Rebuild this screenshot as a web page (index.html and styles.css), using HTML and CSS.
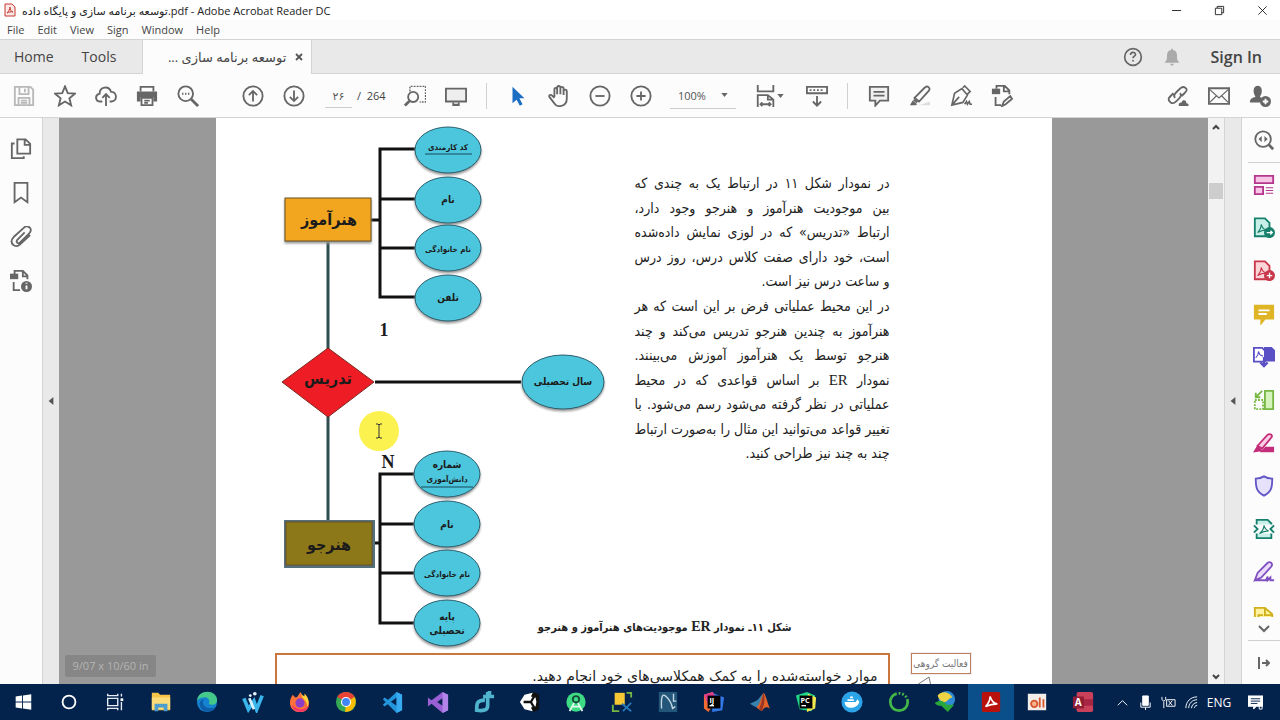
FILE: index.html
```html
<!DOCTYPE html>
<html lang="en">
  <head>
    <meta charset="UTF-8" />
    <meta name="viewport" content="width=device-width, initial-scale=1.0" />
    <title>Adobe Acrobat Reader DC</title>
    <link rel="stylesheet" href="styles.css">
  </head>
  <body>
    <header class="titlebar">
      <svg class="app-icon" viewBox="0 0 12 14"><path d="M1 1h7l3 3v9H1z" fill="#fbe9e8" stroke="#c8362f"/><path d="M3 10c2-2 3-4 3-6 0 3 1 4 3 5-2-.5-4 0-6 1z" fill="none" stroke="#c8362f"/></svg>
      <span class="title">توسعه برنامه سازی و پایگاه داده.pdf - Adobe Acrobat Reader DC</span>
      <div class="window-buttons">
        <button aria-label="Minimize"><svg viewBox="0 0 12 12"><path d="M1 6h10"/></svg></button>
        <button aria-label="Restore"><svg viewBox="0 0 12 12"><path d="M1.5 3.500h7v7h-7zM3.500 3.500v-2h7v7h-2"/></svg></button>
        <button aria-label="Close"><svg viewBox="0 0 12 12"><path d="M1.500 1.500l9 9M10.500 1.500l-9 9"/></svg></button>
      </div>
    </header>

    <nav class="menu">
      <button>File</button><button>Edit</button><button>View</button><button>Sign</button><button>Window</button><button>Help</button>
    </nav>

    <div class="tabs">
      <button class="tab-home">Home</button>
      <button class="tab-tools">Tools</button>
      <div class="tab-doc">
        <span dir="rtl">توسعه برنامه سازی ...</span>
        <button aria-label="Close tab"><svg viewBox="0 0 8 8"><path d="M1 1l6 6M7 1L1 7" fill="none" stroke="#555" stroke-width="1.800"/></svg></button>
      </div>
      <div class="account">
        <button aria-label="Help"><svg class="icon" viewBox="0 0 24 24"><circle cx="12" cy="12" r="10"/><path d="M9 9.500c0-4 6-4 6-.5 0 2-3 2-3 4.500M12 15.500v2"/></svg></button>
        <button aria-label="Notifications"><svg class="icon bell" viewBox="0 0 24 24"><path d="M3 19c3-3 3-5 3-9 0-4 2-6 5-6.500V2h2v1.500c3 .5 5 2.500 5 6.500 0 4 0 6 3 9zM10 20h4c0 3-4 3-4 0z"/></svg></button>
        <button class="sign-in">Sign In</button>
      </div>
    </div>

    <div class="toolbar">
      <div class="group">
        <button class="disabled" aria-label="Save"><svg class="icon" viewBox="0 0 24 24"><path d="M2 2h17l3 3v17H2zM7 2v8h10V2M13 4v4M6 22v-8h12v8M8.500 17h7M8.500 19.500h7"/></svg></button>
        <button aria-label="Star"><svg class="icon" viewBox="0 0 24 24"><path d="M12 1.500l3 7.300 7.800.6-6 5.100 1.900 7.700L12 18l-6.700 4.200 1.900-7.700-6-5.100 7.800-.6z"/></svg></button>
        <button aria-label="Upload"><svg class="icon" viewBox="0 0 24 24"><path d="M8 18H6C0 18-.5 11 5 9.500 5 2 15 0 17.500 7.500 24 7 25 17 18 18h-2M12 23V10M8 14l4-4 4 4"/></svg></button>
        <button aria-label="Print"><svg class="icon" viewBox="0 0 24 24"><path d="M5 7V2h14v5"/><path class="solid" d="M1 7h22v11h-4v-5H5v5H1z"/><path d="M6 14h12v8H6zM9 17h6M9 19.500h4"/></svg></button>
        <button aria-label="Find"><svg class="icon" viewBox="0 0 24 24"><circle cx="9.500" cy="9.500" r="8"/><path d="M5.500 9.500h1.500M8.800 9.500h1.500M12 9.500h1.500"/><path d="M15.500 15.500l7.500 7.500" stroke-width="3"/></svg></button>
      </div>
      <div class="group">
        <button aria-label="Previous page"><svg class="icon" viewBox="0 0 24 24"><circle cx="12" cy="12" r="10.500"/><path d="M12 18V7M7.500 11L12 6.500l4.500 4.500"/></svg></button>
        <button aria-label="Next page"><svg class="icon" viewBox="0 0 24 24"><circle cx="12" cy="12" r="10.500"/><path d="M12 6v11M7.500 13l4.500 4.500 4.500-4.500"/></svg></button>
      </div>
      <div class="pages">
        <input type="text" aria-label="Page number" value="۲۶">
        <span>/&nbsp; 264</span>
      </div>
      <div class="group">
        <button aria-label="Marquee zoom"><svg class="icon" viewBox="0 0 24 24"><path d="M6.500 7V1.500h17v17H17" stroke-dasharray="2 1.200" stroke-width="1.500"/><circle cx="10" cy="13" r="5.500"/><path d="M6 17.500L1 22.500" stroke-width="3"/></svg></button>
        <button aria-label="Full screen"><svg class="icon" viewBox="0 0 24 24"><path d="M1 4h22v14H1z" fill="#eee"/><path d="M9 19v2.500h6V19M8 22h8"/></svg></button>
      </div>
      <i class="divider"></i>
      <div class="group">
        <button aria-label="Select"><svg class="icon" viewBox="0 0 24 24"><path d="M6 2v18l4.500-4 3.500 6.500 3-1.500-3.500-6.500h5.500z" fill="#1b6ec2" stroke="none"/></svg></button>
        <button aria-label="Hand"><svg class="icon" viewBox="0 0 24 24"><path d="M7 13V5c0-2.500 3-2.500 3 0v5M10 10V3c0-2.500 3.500-2.500 3.500 0v7M13.500 10V4c0-2.500 3.500-2.500 3.500 0v7M17 11V7c0-2.500 3.500-2.500 3.500 0v8c0 9-11 10-14 4.500L1.500 13c-1-2 1.500-3 3-1.500L7 14"/></svg></button>
        <button aria-label="Zoom out"><svg class="icon" viewBox="0 0 24 24"><circle cx="12" cy="12" r="10.500"/><path d="M7 12h10"/></svg></button>
        <button aria-label="Zoom in"><svg class="icon" viewBox="0 0 24 24"><circle cx="12" cy="12" r="10.500"/><path d="M7 12h10M12 7v10"/></svg></button>
      </div>
      <div class="zoom">
        <select aria-label="Zoom level"><option>100%</option></select>
        <svg class="caret" viewBox="0 0 8 5"><path d="M0 0h8L4 5z"/></svg>
      </div>
      <div class="group fit">
        <button aria-label="Fit width"><svg class="icon" viewBox="0 0 24 24"><path d="M3 0v7h17V0M3 24V11h11l6 5v8M14 11v5h6M6 21h11M8 19l-2 2 2 2M15 19l2 2-2 2"/></svg><svg class="caret" viewBox="0 0 8 5"><path d="M0 0h8L4 5z"/></svg></button>
        <button aria-label="Scroll mode"><svg class="icon" viewBox="0 0 24 24"><path d="M1 2h22v7H1zM4 5.500h2M8 5.500h2M12 5.500h2M16 5.500h2M12 12v10M7.500 18l4.500 4.500 4.500-4.500"/></svg></button>
      </div>
      <i class="divider"></i>
      <div class="group">
        <button aria-label="Comment"><svg class="icon" viewBox="0 0 24 24"><path d="M2 2h20v15H13l-5 5.500V17H2zM6 7.500h12M6 11.500h12" fill="#f0f0f0"/></svg></button>
        <button aria-label="Highlight"><svg class="icon" viewBox="0 0 24 24"><path d="M11 22h12v-4z" fill="#ddd" stroke="none"/><path d="M6 14L17 3c3-3 7 0 4.500 3.500L11 18l-5-4zM5 16l4 3"/><path class="solid" d="M1 22l3-5 5 4-2 1z"/></svg></button>
        <button aria-label="Sign"><svg class="icon" viewBox="0 0 24 24"><path d="M2 22l3-13 8-5 6 7-5 8zM2 22l8-9M14 3l2-2 6 6-3 3M16 21l2-3 1 3 2-3 1 3h2" stroke-width="1.800"/></svg></button>
        <button aria-label="Edit document"><svg class="icon" viewBox="0 0 24 24"><path d="M6 4V1h9l5 5v4M14 1v6h6M5 13v9h6M12 23l2-5 7-6 2 3-7 6z"/><path class="solid" d="M1 4h9v6H1z"/></svg></button>
      </div>
      <div class="group share">
        <button aria-label="Share link"><svg class="icon" viewBox="0 0 24 24"><path d="M9 14c-3-2 0-5 3-8s5-5 8-3 1 4-1 6l-3 3M14 9c3 2 0 5-2 7-3 3-5 5-8 3-4-3-2-5 0-7l3-3"/><path class="solid" d="M13 23c-1-4 2-4 3-4 1-4 6-2 5 1 3 0 3 3 2 3z"/></svg></button>
        <button aria-label="Mail"><svg class="icon" viewBox="0 0 24 24"><path d="M1 3.500h22v17H1z"/><path d="M2 5l10 9L22 5M2 19l7-7M22 19l-7-7" stroke-width="1.300"/></svg></button>
        <button aria-label="Share with people"><svg class="icon" viewBox="0 0 24 24"><path class="solid" d="M5 6c0-7 9-7 9 0 0 4-1.500 5-2 7l3 2-3 4H1c0-4 2-5 6-6-.5-2-2-3-2-7z"/><circle class="solid" cx="18" cy="18" r="6"/><path d="M18 15v6M15 18h6" stroke="#fff"/></svg></button>
      </div>
    </div>

    <main class="workspace">
      <aside class="left-rail">
        <button aria-label="Page thumbnails"><svg class="icon" viewBox="0 0 24 24"><path d="M8 1.500h9l5 5V17H8zM16 1.500v6h6M5 6H2v16h13v-2"/></svg></button>
        <button aria-label="Bookmarks"><svg class="icon" viewBox="0 0 24 24"><path d="M5 1h14v21l-7-5-7 5z"/></svg></button>
        <button aria-label="Attachments"><svg class="icon" viewBox="0 0 24 24"><path d="M16 7l-8 8c-2 3 1 5 3 3l10-10c5-5-2-10-6-6L4 12c-6 7 2 13 7 8l11-10"/></svg></button>
        <button aria-label="Document info"><svg class="icon" viewBox="0 0 24 24"><path d="M5 5V1h9l5 5v4M14 1v6h5M4 13v9h7"/><path class="solid" d="M0 4h9v6H0z"/><circle class="solid" cx="18" cy="18" r="6"/><path d="M18 17v4M18 14v1" stroke="#fff"/></svg></button>
      </aside>
      <button class="splitter" aria-label="Toggle left pane"><svg viewBox="0 0 6 10"><path d="M6 0v10L0 5z"/></svg></button>

      <section class="viewer">
        <article class="page" lang="fa">
          <svg class="diagram" viewBox="0 0 334 532" direction="rtl">
            <g class="link">
              <path d="M139 31H104V179H139M104 81h35M104 130h35M95 102h9"/>
              <path d="M139 356H104V505H139M104 406h35M104 455h35M98 425h6"/>
              <path d="M99 264h146"/>
              <path class="trunk" d="M52 122v110M52 297v107"/>
            </g>
            <g class="attr">
              <ellipse cx="172" cy="32" rx="33" ry="23"/>
              <ellipse cx="172" cy="82" rx="33" ry="23"/>
              <ellipse cx="172" cy="130" rx="33" ry="23"/>
              <ellipse cx="172" cy="180" rx="33" ry="23"/>
              <ellipse cx="287" cy="264" rx="41" ry="27"/>
              <ellipse cx="171" cy="356" rx="33" ry="23"/>
              <ellipse cx="171" cy="406" rx="33" ry="23"/>
              <ellipse cx="171" cy="455" rx="33" ry="23"/>
              <ellipse cx="171" cy="505" rx="33" ry="23"/>
            </g>
            <path class="key" d="M149 36h47M145 369h52"/>
            <rect class="entity teacher" x="9" y="80" width="86" height="43"/>
            <path class="relation" d="M52 230l46 34-46 35-46-35z"/>
            <rect class="student-frame" x="8" y="402" width="91" height="48"/>
            <rect class="entity student" x="10" y="404" width="86" height="43"/>
            <circle cx="103" cy="313" r="20" fill="#fbf250"/>
            <path d="M100 306h2l1 1 1-1h2M103 307v12M100 320h2l1-1 1 1h2" fill="none" stroke="#333"/>
            <g class="names">
              <text x="53" y="107">هنرآموز</text>
              <text x="52" y="266">تدریس</text>
              <text x="53" y="432">هنرجو</text>
            </g>
            <g class="labels">
              <text class="tiny" x="172" y="32">کد کارمندی</text>
              <text x="172" y="85">نام</text>
              <text class="tiny" x="172" y="134">نام خانوادگی</text>
              <text x="172" y="183">تلفن</text>
              <text x="287" y="267">سال تحصیلی</text>
              <text x="171" y="350">شماره</text>
              <text class="tiny" x="171" y="364">دانش‌آموزی</text>
              <text x="171" y="410">نام</text>
              <text class="tiny" x="171" y="459">نام خانوادگی</text>
              <text x="171" y="502">پایه</text>
              <text x="171" y="516">تحصیلی</text>
            </g>
            <g class="cardinality">
              <text x="108" y="218">1</text>
              <text x="112" y="350">N</text>
            </g>
          </svg>

          <div class="prose" dir="rtl">
            <p>
              <span>در نمودار شکل ۱۱ در ارتباط یک به چندی که</span>
              <span>بین موجودیت هنرآموز و هنرجو وجود دارد،</span>
              <span>ارتباط «تدریس» که در لوزی نمایش داده‌شده</span>
              <span>است، خود دارای صفت کلاس درس، روز درس</span>
              <span class="last">و ساعت درس نیز است.</span>
            </p>
            <p>
              <span>در این محیط عملیاتی فرض بر این است که هر</span>
              <span>هنرآموز به چندین هنرجو تدریس می‌کند و چند</span>
              <span>هنرجو توسط یک هنرآموز آموزش می‌بینند.</span>
              <span>نمودار <b>ER</b> بر اساس قواعدی که در محیط</span>
              <span>عملیاتی در نظر گرفته می‌شود رسم می‌شود. با</span>
              <span>تغییر قواعد می‌توانید این مثال را به‌صورت ارتباط</span>
              <span class="last">چند به چند نیز طراحی کنید.</span>
            </p>
          </div>

          <h2 class="caption" dir="rtl">شکل ۱۱ـ نمودار <b>ER</b> موجودیت‌های هنرآموز و هنرجو</h2>

          <div class="activity">
            <p class="task" dir="rtl">موارد خواسته‌شده را به کمک همکلاسی‌های خود انجام دهید.</p>
            <div class="badge">
              <span dir="rtl">فعالیت گروهی</span>
              <svg viewBox="0 0 24 20"><path d="M6 11L18 3l3 14" fill="none" stroke="#777"/></svg>
            </div>
          </div>
        </article>
        <div class="page-size">9/07 x 10/60 in</div>
      </section>

      <div class="scrollbar">
        <svg viewBox="0 0 8 6"><path d="M1 5l3-3 3 3"/></svg>
        <i class="thumb"></i>
        <svg viewBox="0 0 8 6"><path d="M1 1l3 3 3-3"/></svg>
      </div>
      <button class="splitter right" aria-label="Toggle right pane"><svg viewBox="0 0 6 10"><path d="M6 0v10L0 5z"/></svg></button>

      <aside class="right-rail">
        <button class="search" aria-label="Search tools"><svg class="icon" viewBox="0 0 24 24"><circle cx="11" cy="11" r="8.500"/><path d="M9.500 7.500v7L6 11zM12.500 7.500v7L16 11z" fill="#666" stroke="none"/><path d="M17 17l5 5" stroke-width="3"/></svg></button>
        <button aria-label="Organize pages"><svg class="icon" viewBox="0 0 24 24" stroke="#b5378c"><path d="M2 2h20v8H2zM2 14h9v8H2z" fill="#f7c6e6"/><path d="M14 15h8M14 18h8M14 21h8" stroke-width="1.200"/></svg></button>
        <button aria-label="Export PDF"><svg class="icon" viewBox="0 0 24 24" stroke="#17806d"><path d="M2 1.500h11l5 5V21H2z" fill="#c8f0e8"/><path d="M5 17c3-3 4-6 4-9 1 4 3 6 6 6-4 0-7 1-10 3z" stroke-width="1.200"/><circle cx="18" cy="17" r="6" fill="#17806d" stroke="none"/><path d="M15 17h6M19 15l2 2-2 2" stroke="#fff" stroke-width="1.500"/></svg></button>
        <button aria-label="Create PDF"><svg class="icon" viewBox="0 0 24 24" stroke="#c8374a"><path d="M2 1.500h11l5 5V21H2z" fill="#fbd5d8"/><path d="M5 17c3-3 4-6 4-9 1 4 3 6 6 6-4 0-7 1-10 3z" stroke-width="1.200"/><circle cx="18" cy="17" r="6" fill="#c8374a" stroke="none"/><path d="M15 17h6M18 14v6" stroke="#fff" stroke-width="1.500"/></svg></button>
        <button aria-label="Comment"><svg class="icon" viewBox="0 0 24 24"><path d="M2 3h20v14h-9l-4 5v-5H2z" fill="#dfb526" stroke="#dfb526"/><path d="M6 8h12M6 12h9" stroke="#fff"/></svg></button>
        <button aria-label="Combine files"><svg class="icon" viewBox="0 0 24 24" stroke="#5a4fc4"><path d="M1 2h9l3 3v12H1z" fill="#fff"/><path d="M13 2h7l3 3v11H13z" fill="#5a4fc4"/><path d="M3 13c3-3 3-5 3-7 1 4 2 4 5 5" stroke-width="1.200"/><path d="M12 12v10M8 18l4 4 4-4" stroke-width="2.500"/></svg></button>
        <button aria-label="Compress"><svg class="icon" viewBox="0 0 24 24" stroke="#76b843"><path d="M13 2h9v20h-9z" fill="#d7f3bd"/><path d="M2 12h9v10H2z" stroke-dasharray="2 1.500"/><path d="M10 2L4 8M3 4v5h5"/></svg></button>
        <button aria-label="Redact"><svg class="icon" viewBox="0 0 24 24" stroke="#c42d7a"><path d="M5 15L16 3c3-2 6 1 4 3L10 18z" fill="#fbd0e5"/><path d="M2 21l3-5 4 4zM10 21l4-4h8v4z" fill="#c42d7a"/></svg></button>
        <button aria-label="Protect"><svg class="icon" viewBox="0 0 24 24" stroke="#6255c6"><path d="M12 1.500c3 2 6 2.500 9 2.500 0 10-1 14-9 18.500C4 18 3 14 3 4c3 0 6-.5 9-2.500z" fill="#e6e2fb"/></svg></button>
        <button aria-label="Optimize"><svg class="icon" viewBox="0 0 24 24" stroke="#17806d"><path d="M4 7V2h12l4 4v1M4 17v5h16v-5" fill="#c8f0e8"/><path d="M1 8l4 4-4 4M23 8l-4 4 4 4"/><path d="M7 17c4-3 5-6 5-9 1 4 2 5 5 6-4 0-7 1-10 3z" stroke-width="1.200"/></svg></button>
        <button aria-label="Fill and sign"><svg class="icon" viewBox="0 0 24 24" stroke="#8150c0"><path d="M2 21l3-8L16 2c3-2 6 1 4 4L9 18zM2 21h12l2-4v4l3-3v3h4" fill="#eadcfa"/></svg></button>
        <button class="cut" aria-label="Send for comments"><svg class="icon" viewBox="0 0 24 24" stroke="#d0b01c"><path d="M2 22V2h11l8 7v4" fill="#fff2a0"/><path d="M13 2v8h8M6 22V10h5"/></svg></button>
        <button class="more" aria-label="More tools"><svg class="icon small" viewBox="0 0 12 12"><path d="M1 3l5 5 5-5"/></svg></button>
        <button class="collapse" aria-label="Collapse"><svg class="icon small" viewBox="0 0 12 12"><path d="M1 0v12M4 6h7M8 3l3 3-3 3"/></svg></button>
      </aside>
    </main>

    <footer class="taskbar">
      <div class="apps">
        <button aria-label="Start"><svg viewBox="0 0 24 24"><path d="M4 6l7-1v6.500H4zM12 5l9-1.500v8h-9zM4 12.500h7V19l-7-1zM12 12.500h9v8L12 19z" fill="#fff"/></svg></button>
        <button aria-label="Search"><svg viewBox="0 0 24 24"><circle cx="12" cy="12" r="7" fill="none" stroke="#fff" stroke-width="2"/></svg></button>
        <button aria-label="Task view"><svg viewBox="0 0 24 24"><path d="M4 8h11v8H4zM4 3v2h11V3M4 21v-2h11v2M19 3v3M19 12v9" fill="none" stroke="#e8edf5" stroke-width="1.500"/><path d="M18 8h3v3h-3z" fill="#fff"/></svg></button>
        <button aria-label="Files"><svg viewBox="0 0 24 24"><path d="M2 2h7l2 2h11v17H2z" fill="#f5c449"/><path d="M2 7h20v13H2z" fill="#fbdc78"/><path d="M5 22v-8h14v8h-4v-4H9v4z" fill="#4b9ccf"/></svg></button>
        <button aria-label="Edge"><svg viewBox="0 0 24 24"><circle cx="12" cy="12" r="11" fill="#1683d0"/><path d="M1 11C2-3 23-2 23 10c0 5-6 6-9 4 2-4-1-8-6-7-4 0-6 2-7 4z" fill="#45c98a"/><path d="M9 9c-4 4 0 12 12 9-5 8-17 5-17-4 0-2 2-5 5-5z" fill="#0d5da8"/></svg></button>
        <button aria-label="Writer"><svg viewBox="0 0 24 24"><path d="M2 8l5 12 6-9 3 9 6-15" fill="none" stroke="#39b5ec" stroke-width="4"/><path d="M8 8l5 12" stroke="#d9f4ff" stroke-width="3"/><circle cx="14" cy="3" r="2" fill="#eaf8ff"/><circle cx="9" cy="5" r="1.500" fill="#eaf8ff"/></svg></button>
        <button aria-label="Firefox"><svg viewBox="0 0 24 24"><path d="M2 8l2-4 3 3c3 0 3-4 6-6 0 3 2 4 4 5V3c6 5 8 20-5 20C3 23-1 15 2 8z" fill="#ff7139"/><path d="M13 1c0 3 2 4 4 5V3c4 4 6 10 3 14 0-8-7-8-7-16z" fill="#ffd43b"/><path d="M3 15c2 11 17 10 19 0-5 7-13 6-19 0z" fill="#f53668"/><circle cx="12" cy="13" r="5" fill="#8c3fc4"/></svg></button>
        <button aria-label="Chrome"><svg viewBox="0 0 24 24"><circle cx="12" cy="12" r="11" fill="#34a853"/><path d="M12 12L2.500 6.500A11 11 0 0 1 21.500 6.500z" fill="#ea4335"/><path d="M12 12l9.500-5.500C25 14 20 23 11 23z" fill="#fbbc05"/><circle cx="12" cy="12" r="5.500" fill="#fff"/><circle cx="12" cy="12" r="4.300" fill="#4285f4"/></svg></button>
        <button aria-label="VS Code"><svg viewBox="0 0 24 24"><path d="M17 1l6 3v17l-6 3L2 9l2-2 13 9V7L4 17l-2-2z" fill="#2296dc"/><path d="M17 1l6 3v17l-6 3z" fill="#38aaf0"/></svg></button>
        <button aria-label="Visual Studio"><svg viewBox="0 0 24 24"><path d="M17 1l6 3v17l-6 3L5 14l-4 3V7l4 3zM17 8l-6 4 6 4z" fill="#9860d4"/><path d="M17 1l6 3v17l-6 3z" fill="#b185e8"/></svg></button>
        <button aria-label="Editor"><svg viewBox="0 0 24 24"><path d="M16 1v15c0 5-5 6-12 5 0-7 0-11 9-11M11 6h12M16 2h4" fill="none" stroke="#51b4cf" stroke-width="4"/></svg></button>
        <button aria-label="Unity"><svg viewBox="0 0 24 24"><path d="M16 1l6 3v16l-6 3-5-3V4z" fill="#111"/><path d="M1 12l5-8 9-2-2 4 5 1 1 5-1 5-5 1 2 4-9-2z" fill="#fff"/><path d="M5 12h8M13 12l4-7M13 12l4 7" fill="none" stroke="#111" stroke-width="2.500"/></svg></button>
        <button aria-label="Android Studio"><svg viewBox="0 0 24 24"><circle cx="12" cy="12" r="10.500" fill="#3ddc84"/><circle cx="12" cy="9" r="3.500" fill="#3ddc84" stroke="#154a39" stroke-width="2"/><path d="M10 13L5 22M14 13l5 9M7 17h10" fill="none" stroke="#dff9ea" stroke-width="2"/></svg></button>
        <button aria-label="Database tool"><svg viewBox="0 0 24 24"><path d="M4 2h11v13H4z" fill="#f6c934"/><path d="M2 15v7h7M17 2h5v5" fill="none" stroke="#77b844" stroke-width="2"/><path d="M12 14l10 8M22 13l-9 9" stroke="#2678ba" stroke-width="2"/></svg></button>
        <button aria-label="MySQL Workbench"><svg viewBox="0 0 24 24"><path d="M2 1h20v22H2z" fill="#235678"/><path d="M5 19C4 2 7 3 11 7s5 7 6 12l3-2M18 3v8h3" fill="none" stroke="#c4d7e3" stroke-width="1.500"/></svg></button>
        <button aria-label="IntelliJ IDEA"><svg viewBox="0 0 24 24"><path d="M1 4l9-3 5 7-9 15-5-4z" fill="#f46b35"/><path d="M10 2l13 5-2 14-11 2z" fill="#3379e8"/><path d="M1 4l10-3 4 9-10 4z" fill="#e03c90"/><path d="M5 5h14v14H5z"/><text x="7" y="13" fill="#fff" font-size="8" font-weight="bold">IJ</text><path d="M7 16h5" stroke="#fff" stroke-width="1.500"/></svg></button>
        <button aria-label="MATLAB"><svg viewBox="0 0 24 24"><path d="M1 14l8-4 7-8-6 16-4-1z" fill="#3982ae"/><path d="M8 18c4-2 5-12 8-16 3 3 4 12 7 17-4-2-6-2-9 3z" fill="#df632b"/><path d="M16 2c-2 5-2 12-5 17l3 3c2-7 4-10 2-20z" fill="#9c3524"/></svg></button>
        <button aria-label="PyCharm"><svg viewBox="0 0 24 24"><path d="M1 5l12-4 9 4-4 17-13-2z" fill="#21d789"/><path d="M14 3l9 4-1 12-9 4z" fill="#f3e84d"/><path d="M5 5h14v14H5z"/><text x="6" y="13" fill="#fff" font-size="8" font-weight="bold">PC</text><path d="M7 16h5" stroke="#fff" stroke-width="1.500"/></svg></button>
        <button aria-label="Docker"><svg viewBox="0 0 24 24"><circle cx="12" cy="12" r="11.500" fill="#2ca4e8"/><path d="M4 12h12l2-3 2 3c-2 8-16 9-16 0zM7 9h7v2H7zM10 6h3v2h-3z" fill="#fff"/></svg></button>
        <button aria-label="Anaconda"><svg viewBox="0 0 24 24"><circle cx="12" cy="12" r="9.500" fill="none" stroke="#43b649" stroke-width="3" stroke-dasharray="42 2 2 2 2 2 2 2"/></svg></button>
        <button aria-label="Download Manager"><svg viewBox="0 0 24 24"><circle cx="14" cy="9" r="9" fill="#2e8bd4"/><path d="M4 5C9-2 18 2 20 7c-3 0-5 4-8 5S5 9 4 5z" fill="#f0d443"/><path d="M1 13c5-4 11-2 13 2h8l-7 8-7-7c-3 0-5 0-7-3z" fill="#29a63c"/></svg></button>
        <button class="active" aria-label="Acrobat Reader"><svg viewBox="0 0 24 24"><rect x="2" y="1" width="20" height="22" rx="2" fill="#b9120c"/><path d="M6 17c3-3 5-7 5-11 2 6 4 8 8 8-5 0-9 1-13 3z" fill="none" stroke="#fff" stroke-width="1.800"/></svg></button>
        <button aria-label="Recorder"><svg viewBox="0 0 24 24"><path d="M2 3h20v18H2z" fill="#f3eee9"/><circle cx="9" cy="14" r="3.500" fill="#f6b38c" stroke="#d9562f" stroke-width="2"/><path d="M15 7v11M19 9v9" stroke="#d9562f" stroke-width="2"/></svg></button>
        <button aria-label="Access"><svg viewBox="0 0 24 24"><rect x="5" y="1" width="18" height="22" rx="2" fill="#c9405a"/><path d="M5 9h18v7H5z" fill="#a52542"/><path d="M1 6h12v13H1z" fill="#8f1d33"/><text x="3" y="16" fill="#fff" font-size="11" font-weight="bold">A</text></svg></button>
      </div>
      <div class="tray">
        <button aria-label="Show hidden icons"><svg viewBox="0 0 16 16"><path d="M3 11l5-5 5 5"/></svg></button>
        <button aria-label="Microphone"><svg viewBox="0 0 16 16"><path d="M5 1h6v10H5z" fill="#fff"/><path d="M3 8v5h10V8M8 13v3"/></svg></button>
        <button aria-label="Battery"><svg viewBox="0 0 16 16"><path d="M1 2v3q2 3 4 0V2M3 7v7M6 5h9v7H6zM8 6l4 5M12 6l-4 5"/></svg></button>
        <button aria-label="Network"><svg viewBox="0 0 16 16"><path d="M2 14C2 7 7 2 14 2M5 14c0-5 4-9 9-9M8 14c0-3 3-6 6-6M11 14c0-1 1-3 3-3"/></svg></button>
        <button class="lang">ENG</button>
        <button class="notify" aria-label="Notifications"><svg viewBox="0 0 16 16"><path d="M0 1h16v11H9l-3 3v-3H0z" fill="#fff"/><path d="M3 4h10M3 6.500h10M3 9h7" stroke="#03224c"/><path d="M12 9v6h3v-3"/></svg></button>
      </div>
    </footer>
  </body>
</html>
```
FILE: styles.css
```css
* {
  box-sizing: border-box;
}

body {
  margin: 0;
  height: 100vh;
  display: flex;
  flex-direction: column;
  overflow: hidden;
  font-family: "Open Sans", "DejaVu Sans", sans-serif;
  font-size: 12px;
  color: #444;
  background-color: #fcfcfc;
}

button {
  display: flex;
  align-items: center;
  justify-content: center;
  padding: 0;
  border: none;
  background: none;
  font: inherit;
  color: inherit;
}

svg {
  flex: none;
}

.icon {
  width: 22px;
  height: 22px;
  fill: none;
  stroke-width: 2;
}

.icon:not([stroke]) {
  stroke: #666;
}

.icon .solid {
  fill: #666;
  stroke: none;
}

.icon.small {
  width: 12px;
  height: 12px;
}

.caret {
  width: 7px;
  height: 4px;
  fill: #666;
}

/* title and menu */
.titlebar {
  display: flex;
  align-items: center;
  height: 20px;
  padding-left: 4px;
  background-color: #fff;
  color: #222;
}

.app-icon {
  width: 12px;
  height: 14px;
  margin-right: 6px;
}

.title {
  white-space: nowrap;
  font-size: 11px;
}

.window-buttons {
  display: flex;
  margin-left: auto;
}

.window-buttons button {
  width: 43px;
  height: 18px;
}

.window-buttons button:last-child {
  margin-right: -4px;
}

.window-buttons svg {
  width: 11px;
  height: 11px;
  fill: none;
  stroke: #222;
}

.menu {
  display: flex;
  gap: 13px;
  height: 19px;
  padding-left: 7px;
  font-size: 11px;
}

/* tabs */
.tabs {
  display: flex;
  height: 35px;
  background-color: #e9e9e9;
  border-top: 1px solid #d4d4d4;
  border-bottom: 1px solid #d4d4d4;
  font-size: 14px;
}

.tab-home,
.tab-tools {
  padding: 0 14px;
}

.tab-doc {
  display: flex;
  align-items: center;
  justify-content: flex-end;
  gap: 9px;
  width: 170px;
  height: 34px;
  margin-left: 12px;
  padding-right: 8px;
  background-color: #fcfcfc;
  border-left: 1px solid #d4d4d4;
  border-right: 1px solid #d4d4d4;
  font-size: 13px;
  white-space: nowrap;
}

.tab-doc svg {
  width: 8px;
  height: 8px;
}

.account {
  display: flex;
  align-items: center;
  margin-left: auto;
  padding-right: 18px;
}

.account button {
  width: 39px;
}

.account .icon {
  width: 20px;
  height: 20px;
}

.account .bell {
  fill: #aaa;
  stroke: none;
}

.account .sign-in {
  width: auto;
  margin-left: 19px;
  font-size: 16px;
  font-weight: 600;
}

/* toolbar */
.toolbar {
  display: flex;
  align-items: center;
  height: 44px;
  padding-left: 3px;
  border-bottom: 1px solid #d4d4d4;
}

.group {
  display: flex;
}

.group button {
  width: 41px;
  height: 36px;
}

.group + .group:not(.share) {
  margin-left: 24px;
}

.disabled {
  opacity: 0.45;
}

.pages {
  display: flex;
  align-items: center;
  width: 80px;
  padding-left: 11px;
  font-size: 11px;
}

.pages input {
  width: 27px;
  height: 24px;
  margin-right: 5px;
  padding: 0;
  border: none;
  border-bottom: 1px solid #ccc;
  background: none;
  font: inherit;
  color: #555;
  text-align: center;
}

.divider {
  width: 1px;
  height: 26px;
  margin: 0 10px;
  background-color: #d0d0d0;
}

.zoom {
  display: flex;
  align-items: center;
  width: 66px;
  height: 26px;
  margin: 0 9px;
  border-bottom: 1px solid #ccc;
}

.zoom select {
  flex: 1;
  padding: 0 0 0 8px;
  border: none;
  background: none;
  appearance: none;
  font: inherit;
  font-size: 11px;
  color: #555;
}

.zoom .caret {
  margin-right: 8px;
}

.fit {
  gap: 10px;
}

.fit .caret {
  margin-right: -8px;
}

.share {
  margin-left: auto;
}

/* document area */
.workspace {
  flex: 1;
  min-height: 0;
  display: flex;
}

.left-rail {
  width: 42px;
  padding-top: 9px;
}

.left-rail button {
  width: 42px;
  height: 44px;
}

.splitter {
  width: 17px;
  background-color: #e9e9e9;
  border-left: 1px solid #d4d4d4;
}

.splitter svg {
  width: 6px;
  height: 8px;
  fill: #555;
}

.splitter.right {
  width: 18px;
  border-right: 1px solid #d4d4d4;
}

.viewer {
  flex: 1;
  min-width: 0;
  position: relative;
  overflow: hidden;
  background-color: #999;
}

.page {
  display: grid;
  grid-template-columns: 334px 280px 1fr;
  max-width: 836px;
  min-height: 100%;
  margin: 0 auto;
  padding-left: 60px;
  background-color: #fff;
  color: #222;
  font-family: "DejaVu Sans Condensed", "DejaVu Sans", sans-serif;
}

.diagram {
  grid-column: 1;
  grid-row: 1 / 3;
  width: 334px;
  height: 532px;
}

.link {
  fill: none;
  stroke: #111;
  stroke-width: 3;
}

.link .trunk {
  stroke: #2f4f4f;
}

.attr {
  fill: #4cc6dc;
  stroke: #2b5f6e;
  filter: drop-shadow(0 2px 1px #999);
}

.key {
  stroke: #164a5c;
}

.entity {
  stroke: #6b5020;
}

.teacher {
  fill: #f2a51f;
  filter: drop-shadow(0 2px 1px #999);
}

.student {
  fill: #8d7819;
}

.student-frame {
  fill: #55707c;
}

.relation {
  fill: #ee1c25;
  stroke: #7c2a20;
}

.diagram text {
  text-anchor: middle;
  font-weight: bold;
  fill: #1b1b1b;
}

.names {
  font-size: 16px;
}

.labels {
  font-size: 10px;
}

.labels .tiny {
  font-size: 8px;
}

.cardinality {
  font-family: "Liberation Serif", serif;
  font-size: 18px;
}

.prose {
  grid-column: 2;
  padding: 53px 0 0 25px;
  font-size: 14px;
}

.prose p {
  margin: 0;
}

.prose span {
  display: block;
  height: 25px;
  line-height: 25px;
  white-space: nowrap;
  text-align: justify;
  text-align-last: justify;
}

.prose span:nth-child(even) {
  height: 24px;
}

.prose .last {
  text-align-last: right;
}

.prose b,
.caption b {
  font-family: "Liberation Serif", serif;
}

.prose b {
  font-size: 15px;
  font-weight: normal;
}

.caption b {
  font-size: 14px;
}

.caption {
  grid-column: 1 / 3;
  grid-row: 2;
  align-self: end;
  margin: 0 98px 12px 0;
  font-size: 11px;
  line-height: 20px;
}

.activity {
  grid-column: 1 / 4;
  display: flex;
  align-items: flex-start;
  gap: 21px;
  margin-left: -1px;
  padding-top: 3px;
}

.task {
  width: 615px;
  height: 60px;
  margin: 0;
  padding: 10px;
  border: 2px solid #c9773f;
  font-family: "DejaVu Sans", sans-serif;
  font-size: 14px;
  line-height: 22px;
}

.badge span {
  display: block;
  width: 60px;
  height: 21px;
  border: 1px solid #c08060;
  outline: 1px solid #eee;
  font-size: 10px;
  line-height: 19px;
  text-align: center;
  white-space: nowrap;
  color: #777;
}

.badge svg {
  display: block;
  width: 24px;
  height: 20px;
}

.page-size {
  position: absolute;
  left: 6px;
  bottom: 7px;
  width: 91px;
  border-radius: 2px;
  background-color: #868686;
  color: #b4b4b4;
  font-size: 11px;
  line-height: 22px;
  text-align: center;
}

.scrollbar {
  display: flex;
  flex-direction: column;
  align-items: center;
  width: 16px;
  padding: 6px 0 4px;
  background-color: #f2f2f2;
}

.scrollbar svg {
  width: 8px;
  height: 6px;
  fill: none;
  stroke: #444;
  stroke-width: 2;
}

.thumb {
  width: 14px;
  height: 16px;
  margin-top: 53px;
  margin-bottom: auto;
  background-color: #cdcdcd;
}

.right-rail {
  display: flex;
  flex-direction: column;
  width: 38px;
  padding-left: 6px;
}

.right-rail button {
  flex: none;
  width: 32px;
  height: 43px;
}

.right-rail .search {
  height: 45px;
  border-bottom: 1px solid #d0d0d0;
}

.right-rail .cut {
  align-items: flex-start;
  height: 11px;
  margin-top: 13px;
  overflow: hidden;
}

.right-rail .more {
  flex: 1;
  border-bottom: 1px solid #d0d0d0;
}

/* taskbar */
.taskbar {
  display: flex;
  height: 36px;
  background-color: #03224c;
  color: #fff;
}

.apps {
  flex: 1;
  display: flex;
}

.apps button {
  flex: 1;
}

.apps .active {
  background-color: #0b4f8a;
}

.apps svg {
  width: 22px;
  height: 22px;
}

.tray {
  display: flex;
  width: 174px;
  padding-left: 5px;
}

.tray button {
  width: 23px;
}

.tray svg {
  width: 15px;
  height: 15px;
  fill: none;
  stroke: #fff;
}

.tray .lang {
  width: 32px;
}

.tray .notify {
  width: 40px;
}
```
